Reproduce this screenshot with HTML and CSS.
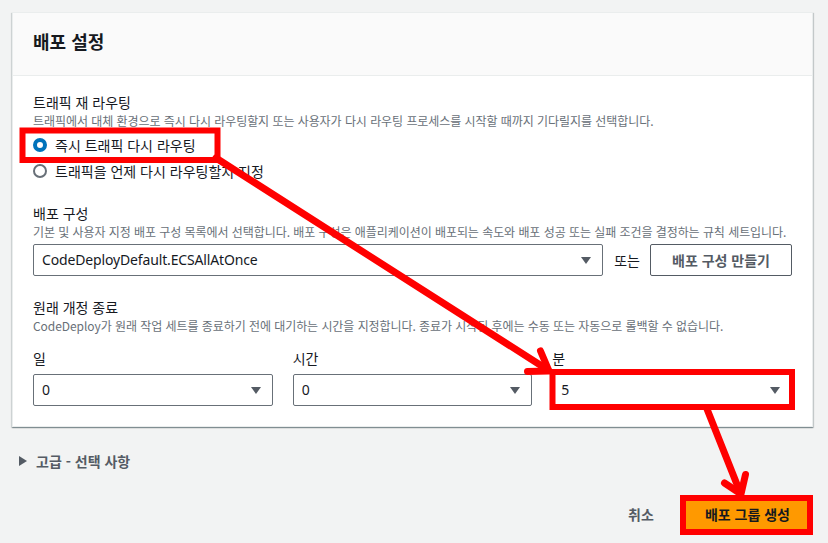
FILE: index.html
```html
<!DOCTYPE html>
<html lang="ko">
<head>
<meta charset="utf-8">
<title>배포 설정</title>
<link rel="stylesheet" href="styles.css">
</head>
<body>
<div class="page">
  <section class="card">
    <header class="card-header"><h2 class="card-title">배포 설정</h2></header>
    <div class="card-body">
      <div class="field">
        <div class="label">트래픽 재 라우팅</div>
        <div class="desc">트래픽에서 대체 환경으로 즉시 다시 라우팅할지 또는 사용자가 다시 라우팅 프로세스를 시작할 때까지 기다릴지를 선택합니다.</div>
        <div class="radios">
          <div class="radio"><span class="radio-dot checked"></span><span class="radio-text">즉시 트래픽 다시 라우팅</span></div>
          <div class="radio"><span class="radio-dot"></span><span class="radio-text">트래픽을 언제 다시 라우팅할지 지정</span></div>
        </div>
      </div>
      <div class="field field-config">
        <div class="label">배포 구성</div>
        <div class="desc">기본 및 사용자 지정 배포 구성 목록에서 선택합니다. 배포 구성은 애플리케이션이 배포되는 속도와 배포 성공 또는 실패 조건을 결정하는 규칙 세트입니다.</div>
        <div class="config-row">
          <div class="select select-wide"><span class="select-value latin">CodeDeployDefault.ECSAllAtOnce</span><span class="caret"></span></div>
          <span class="or">또는</span>
          <div class="btn-normal">배포 구성 만들기</div>
        </div>
      </div>
      <div class="field field-term">
        <div class="label">원래 개정 종료</div>
        <div class="desc">CodeDeploy가 원래 작업 세트를 종료하기 전에 대기하는 시간을 지정합니다. 종료가 시작된 후에는 수동 또는 자동으로 롤백할 수 없습니다.</div>
        <div class="time-grid">
          <div class="col"><div class="col-label">일</div><div class="select"><span class="select-value latin">0</span><span class="caret"></span></div></div>
          <div class="col"><div class="col-label">시간</div><div class="select"><span class="select-value latin">0</span><span class="caret"></span></div></div>
          <div class="col"><div class="col-label">분</div><div class="select"><span class="select-value latin">5</span><span class="caret"></span></div></div>
        </div>
      </div>
    </div>
  </section>
  <div class="advanced"><span class="tri"></span><span>고급 - 선택 사항</span></div>
  <div class="footer">
    <div class="btn-link">취소</div>
    <div class="btn-primary">배포 그룹 생성</div>
  </div>
</div>
<svg class="annot" width="828" height="543" viewBox="0 0 828 543">
  <g fill="none" stroke="#ff0000" stroke-width="6">
    <rect x="22.5" y="130.5" width="195" height="29.5"/>
    <rect x="552.5" y="372" width="239.5" height="35"/>
    <rect x="683" y="498" width="127" height="34"/>
  </g>
  <g fill="none" stroke="#ff0000" stroke-width="7" stroke-linecap="round" stroke-linejoin="round">
    <line x1="216" y1="158" x2="548" y2="370"/>
    <polyline points="540.5,351 549,371 527.5,371.5"/>
    <line x1="707" y1="409" x2="740" y2="492"/>
    <polyline points="745.5,474.5 741,494 724.5,483"/>
  </g>
</svg>
</body>
</html>
```

FILE: styles.css
```css
* { box-sizing: border-box; }
html, body { margin: 0; padding: 0; }
body {
  background: #f2f3f3;
  font-family: "Noto Sans CJK KR", sans-serif;
  color: #16191f;
  width: 828px;
  height: 543px;
  overflow: hidden;
  position: relative;
}
.page { padding: 12px 15px 0 12px; }

.card {
  background: #ffffff;
  border: 1px solid #eaeded;
  box-shadow: 0 1px 1px 0 rgba(0, 28, 36, 0.3), 1px 1px 1px 0 rgba(0, 28, 36, 0.15), -1px 1px 1px 0 rgba(0, 28, 36, 0.1);
}
.card-header {
  background: #fafafa;
  border-bottom: 1px solid #eaeded;
  padding: 18px 20px 0;
  height: 63px;
}
.card-title {
  margin: 0;
  font-size: 18px;
  line-height: 20px;
  font-weight: 700;
}
.card-body { padding: 16px 20px 20px; }

.label, .col-label {
  font-size: 14px;
  line-height: 20px;
  color: #16191f;
}
.desc {
  font-size: 12px;
  line-height: 18px;
  letter-spacing: -0.06px;
  color: #687078;
  white-space: nowrap;
}
.radios { margin-top: 2px; }
.radio {
  display: flex;
  align-items: center;
  height: 26px;
  gap: 8px;
}
.radio-dot {
  width: 14px;
  height: 14px;
  border-radius: 50%;
  border: 2px solid #687078;
  background: #fff;
  flex: none;
}
.radio-dot.checked { border: 4px solid #0073bb; }
.radio-text {
  font-size: 14px;
  line-height: 20px;
}

.field-config { margin-top: 19px; }
.config-row {
  margin-top: 3px;
  display: flex;
  align-items: center;
}
.select {
  height: 32px;
  border: 1px solid #687078;
  border-radius: 2px;
  background: #fff;
  display: flex;
  align-items: center;
  justify-content: space-between;
  padding: 0 11px 0 8px;
}
.select-wide { flex: 1; }
.select-value {
  font-size: 14px;
  line-height: 20px;
  color: #16191f;
}
.latin { font-family: "Noto Sans", sans-serif; letter-spacing: -0.15px; }
.caret {
  width: 0;
  height: 0;
  border-left: 5px solid transparent;
  border-right: 5px solid transparent;
  border-top: 7px solid #545b64;
  margin-top: 1px;
}
.or {
  margin: 0 10px 0 11px;
  font-size: 14px;
  color: #16191f;
}
.btn-normal {
  width: 142px;
  height: 32px;
  border: 1px solid #545b64;
  border-radius: 2px;
  display: flex;
  align-items: center;
  justify-content: center;
  font-size: 14px;
  font-weight: 700;
  color: #545b64;
  background: #fff;
}

.field-term { margin-top: 21px; }
.time-grid {
  margin-top: 13px;
  display: grid;
  grid-template-columns: 1fr 1fr 1fr;
  column-gap: 20px;
}
.col-label { margin-bottom: 6px; }

.advanced {
  margin-top: 24px;
  padding-left: 7px;
  display: flex;
  align-items: center;
  gap: 9px;
  height: 20px;
  font-size: 14px;
  font-weight: 700;
  color: #545b64;
}
.tri {
  width: 0;
  height: 0;
  border-top: 5px solid transparent;
  border-bottom: 5px solid transparent;
  border-left: 8px solid #545b64;
}

.footer {
  margin-top: 27px;
  display: flex;
  justify-content: flex-end;
  align-items: center;
  gap: 8px;
}
.btn-link, .btn-primary {
  height: 32px;
  display: flex;
  align-items: center;
  font-size: 14px;
  font-weight: 700;
}
.btn-link { padding: 0 20px; color: #545b64; }
.btn-primary {
  padding: 0 22px;
  background: #ff9900;
  border: 1px solid #ff9900;
  border-radius: 2px;
  color: #16191f;
}

.annot {
  position: absolute;
  left: 0;
  top: 0;
  pointer-events: none;
}
```
